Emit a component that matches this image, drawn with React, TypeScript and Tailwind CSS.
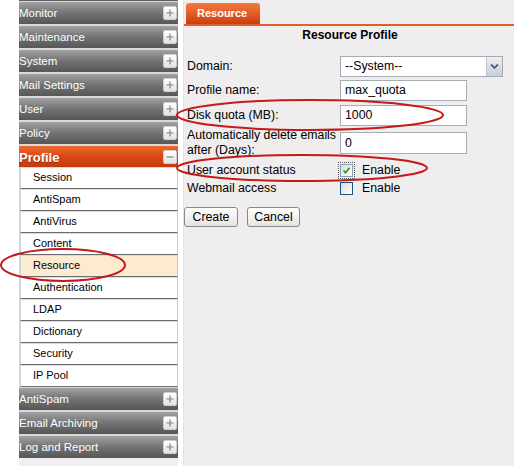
import React from "react";

const Plus = ({ minus }: { minus?: boolean }) => (
  <div className="w-[14px] h-[14px] rounded-[2px] bg-gradient-to-b from-white to-[#e2e2e2] border border-[#cfcfcf] flex items-center justify-center">
    <svg width="10" height="10" viewBox="0 0 10 10">
      <path d={minus ? "M1.5 5h7" : "M1.5 5h7M5 1.5v7"} stroke="#808080" strokeWidth="1.2" />
    </svg>
  </div>
);

const Header = ({ label, className = "" }: { label: string; className?: string }) => (
  <div
    className={`h-[22px] shrink-0 flex items-center justify-between pr-[1px] bg-gradient-to-b from-[#a2a2a2] via-[#737373] to-[#575757] text-white text-[11.5px] ${className}`}
  >
    <span className="pt-[2px]">{label}</span>
    <Plus />
  </div>
);

const subItems = [
  "Session",
  "AntiSpam",
  "AntiVirus",
  "Content",
  "Resource",
  "Authentication",
  "LDAP",
  "Dictionary",
  "Security",
  "IP Pool",
];

export default function App() {
  return (
    <div className="relative w-[514px] h-[466px] overflow-hidden flex bg-white font-['Liberation_Sans',Arial,sans-serif]">
      <div className="w-[19px] shrink-0 bg-white" />
      {/* Sidebar */}
      <div className="w-[159px] shrink-0 flex flex-col bg-[#d9d9d9]">
        <div className="h-[1px] bg-[#5e5e5e]" />
        <Header label="Monitor" className="mt-[1px]" />
        <Header label="Maintenance" className="mt-[2px]" />
        <Header label="System" className="mt-[2px]" />
        <Header label="Mail Settings" className="mt-[2px]" />
        <Header label="User" className="mt-[2px]" />
        <Header label="Policy" className="mt-[2px]" />
        <div className="mt-[2px] h-[21px] shrink-0 flex items-center justify-between pr-[1px] bg-gradient-to-b from-[#ee6a2e] via-[#d94716] to-[#c23a0c] text-white text-[13px] font-bold">
          <span className="pt-[2px] [text-shadow:0_1px_0_#8a2a06]">Profile</span>
          <Plus minus />
        </div>
        <div className="flex flex-col">
          {subItems.map((s) => (
            <div
              key={s}
              className={`h-[22px] ml-[1px] flex items-center pl-[12px] text-[11px] text-black border-l border-r border-[#c3d1d8] border-b border-b-[#6c6c6c] shadow-[inset_0_1px_0_#dadada] ${
                s === "Resource" ? "bg-[#fdebd1]" : "bg-white"
              }`}
            >
              {s}
            </div>
          ))}
        </div>
        <Header label="AntiSpam" className="mt-[1px]" />
        <Header label="Email Archiving" className="mt-[2px]" />
        <Header label="Log and Report" className="mt-[2px]" />
        <div className="flex-1 bg-[#f0eef0]" />
      </div>
      <div className="w-[6px] shrink-0 bg-white border-r border-[#e4e2e4]" />
      {/* Main */}
      <div className="flex-1 bg-[#efedee] flex flex-col">
        <div className="h-[26px] pt-[3px] pl-[2px] border-b-2 border-[#e0602a] flex shrink-0">
          <div className="w-[74px] rounded-t-[3px] bg-gradient-to-b from-[#f47a3c] to-[#cc3c0c] text-white font-bold text-[11px] pl-[11px] flex items-center">
            Resource
          </div>
        </div>
        <div className="text-center font-bold text-[12px] mt-[2px] pl-[2px] text-black leading-[14px]">Resource Profile</div>
        <div className="flex flex-col text-[12.3px] text-black mt-[13px]">
          {/* Domain */}
          <div className="h-[22px] flex items-center">
            <div className="w-[156px] pl-[3px]">Domain:</div>
            <div className="w-[163px] h-[21px] border border-[#a5acb2] bg-white flex items-center">
              <span className="flex-1 pl-[4px]">--System--</span>
              <div className="w-[16px] h-[19px] bg-gradient-to-b from-[#eef0f4] to-[#c8ced8] border-l border-[#c0c6d0] flex items-center justify-center">
                <svg width="9" height="7" viewBox="0 0 9 7">
                  <path d="M1 1.5l3.5 3.5 3.5-3.5" stroke="#4d6185" strokeWidth="1.8" fill="none" />
                </svg>
              </div>
            </div>
          </div>
          {/* Profile name */}
          <div className="h-[22px] mt-[2px] flex items-center">
            <div className="w-[156px] pl-[3px]">Profile name:</div>
            <div className="w-[127px] h-[21px] border border-[#a5acb2] bg-white flex items-center pl-[4px]">max_quota</div>
          </div>
          {/* Disk quota */}
          <div className="h-[22px] mt-[3px] flex items-center">
            <div className="w-[156px] pl-[3px]">Disk quota (MB):</div>
            <div className="w-[127px] h-[21px] border border-[#a5acb2] bg-white flex items-center pl-[4px]">1000</div>
          </div>
          {/* Auto delete */}
          <div className="h-[28px] mt-[3px] flex items-center">
            <div className="w-[156px] pl-[3px] leading-[15px]">
              Automatically delete emails
              <br />
              after (Days):
            </div>
            <div className="w-[127px] h-[22px] border border-[#a5acb2] bg-white flex items-center pl-[4px]">0</div>
          </div>
          {/* User account status */}
          <div className="h-[18px] mt-[4px] flex items-center">
            <div className="w-[156px] pl-[3px]">User account status</div>
            <div className="w-[13px] h-[13px] outline outline-1 outline-dotted outline-[#555] outline-offset-[1px] border border-[#8aa0b8] bg-gradient-to-br from-[#dcdcd6] to-white flex items-center justify-center">
              <svg width="9" height="9" viewBox="0 0 9 9">
                <path d="M1.5 4.5l2 2.2 4-5" stroke="#21a121" strokeWidth="1.8" fill="none" />
              </svg>
            </div>
            <span className="ml-[9px]">Enable</span>
          </div>
          {/* Webmail */}
          <div className="h-[16px] mt-[1px] flex items-center">
            <div className="w-[156px] pl-[3px]">Webmail access</div>
            <div className="w-[13px] h-[13px] border border-[#1c5180] bg-gradient-to-br from-[#dcdcd6] to-white" />
            <span className="ml-[9px]">Enable</span>
          </div>
          {/* Buttons */}
          <div className="flex mt-[11px] gap-[9px]">
            <div className="w-[54px] h-[20px] rounded-[3px] border border-[#8a8a8a] bg-gradient-to-b from-white to-[#e6e4e0] flex items-center justify-center">
              Create
            </div>
            <div className="w-[53px] h-[20px] rounded-[3px] border border-[#8a8a8a] bg-gradient-to-b from-white to-[#e6e4e0] flex items-center justify-center">
              Cancel
            </div>
          </div>
        </div>
      </div>
      {/* Red annotation ellipses */}
      <svg className="absolute inset-0 pointer-events-none" width="514" height="466" viewBox="0 0 514 466">
        <ellipse cx="310" cy="115" rx="133" ry="15" fill="none" stroke="#c41a1a" strokeWidth="2" />
        <ellipse cx="302" cy="168" rx="125" ry="13" fill="none" stroke="#c41a1a" strokeWidth="2" />
        <ellipse cx="63" cy="265" rx="62" ry="16" fill="none" stroke="#c41a1a" strokeWidth="2" />
      </svg>
    </div>
  );
}
